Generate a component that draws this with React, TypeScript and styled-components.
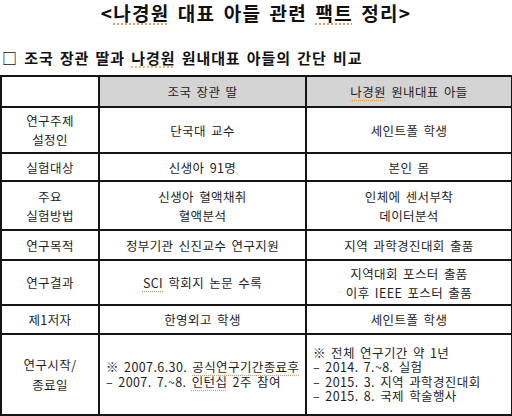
import React from "react";
import styled, { createGlobalStyle } from "styled-components";

const GlobalStyle = createGlobalStyle`
  body {
    margin: 0;
    background: #ffffff;
    font-family: "Noto Sans CJK KR", "Noto Sans", sans-serif;
    color: #1e1e1e;
  }
`;

const Page = styled.div`
  width: 512px;
  height: 416px;
  overflow: hidden;
  display: flex;
  flex-direction: column;
`;

const Title = styled.h1`
  margin: 2px 0 0;
  height: 22px;
  line-height: 22px;
  text-align: center;
  font-size: 19px;
  font-weight: 700;
  letter-spacing: 1.2px;
  word-spacing: 3px;
  color: #111;
`;

const Subtitle = styled.h2`
  margin: 22px 0 0 2px;
  height: 24px;
  line-height: 24px;
  font-size: 15px;
  font-weight: 700;
  letter-spacing: 0.9px;
  word-spacing: 2px;
  color: #111;
`;

// orange dotted line the word processor draws under flagged words
const Marked = styled.span`
  text-decoration-line: underline;
  text-decoration-style: dotted;
  text-decoration-color: #e3a04a;
  text-underline-offset: 3px;
`;

const Table = styled.table`
  margin-top: 5px;
  width: 511px;
  border-collapse: collapse;
  table-layout: fixed;
  font-size: 12.5px;
  letter-spacing: 0.4px;
  word-spacing: 2px;
`;

const Row = styled.tr<{ $h: number }>`
  height: ${(p) => p.$h}px;
`;

const Cell = styled.td<{ $head?: boolean; $list?: boolean }>`
  border: 2px solid #151515;
  padding: ${(p) => (p.$list ? "0 6px" : "0 4px")};
  text-align: ${(p) => (p.$list ? "left" : "center")};
  vertical-align: middle;
  line-height: ${(p) => (p.$list ? "14.5px" : "19px")};
  background: ${(p) => (p.$head ? "#d4d4d4" : "#ffffff")};
  white-space: nowrap;
`;

const Line = styled.div``;

const rows: { h: number; label: string[]; a: React.ReactNode[]; b: React.ReactNode[] }[] = [
  { h: 46, label: ["연구주제", "설정인"], a: ["단국대 교수"], b: ["세인트폴 학생"] },
  { h: 28, label: ["실험대상"], a: ["신생아 91명"], b: ["본인 몸"] },
  { h: 49, label: ["주요", "실험방법"], a: ["신생아 혈액채취", "혈액분석"], b: ["인체에 센서부착", "데이터분석"] },
  { h: 30, label: ["연구목적"], a: ["정부기관 신진교수 연구지원"], b: ["지역 과학경진대회 출품"] },
  {
    h: 45,
    label: ["연구결과"],
    a: [
      <>
        <Marked>SCI</Marked> 학회지 논문 수록
      </>,
    ],
    b: ["지역대회 포스터 출품", "이후 IEEE 포스터 출품"],
  },
  { h: 29, label: ["제1저자"], a: ["한영외고 학생"], b: ["세인트폴 학생"] },
];

const App = () => {
  return (
    <Page>
      <GlobalStyle />
      <Title>
        &lt;<Marked>나경원</Marked> 대표 아들 관련 <Marked>팩트</Marked> 정리&gt;
      </Title>
      <Subtitle>
        □ 조국 장관 딸과 <Marked>나경원</Marked> 원내대표 아들의 간단 비교
      </Subtitle>
      <Table>
        <colgroup>
          <col style={{ width: 98 }} />
          <col style={{ width: 207 }} />
          <col style={{ width: 206 }} />
        </colgroup>
        <tbody>
          <Row $h={31}>
            <Cell />
            <Cell $head>조국 장관 딸</Cell>
            <Cell $head>
              <Marked>나경원</Marked> 원내대표 아들
            </Cell>
          </Row>
          {rows.map((r, i) => (
            <Row $h={r.h} key={i}>
              <Cell>
                {r.label.map((t, j) => (
                  <Line key={j}>{t}</Line>
                ))}
              </Cell>
              <Cell>
                {r.a.map((t, j) => (
                  <Line key={j}>{t}</Line>
                ))}
              </Cell>
              <Cell>
                {r.b.map((t, j) => (
                  <Line key={j}>{t}</Line>
                ))}
              </Cell>
            </Row>
          ))}
          <Row $h={81}>
            <Cell style={{ lineHeight: "20px" }}>
              <Line>연구시작/</Line>
              <Line>종료일</Line>
            </Cell>
            <Cell $list>
              <Line>
                ※ 2007.6.30. <Marked>공식연구기간종료후</Marked>
              </Line>
              <Line>
                – 2007. 7.~8. <Marked>인턴십</Marked> 2주 참여
              </Line>
            </Cell>
            <Cell $list>
              <Line>※ 전체 연구기간 약 1년</Line>
              <Line>– 2014. 7.~8. 실험</Line>
              <Line>– 2015. 3. 지역 과학경진대회</Line>
              <Line>– 2015. 8. 국제 학술행사</Line>
            </Cell>
          </Row>
        </tbody>
      </Table>
    </Page>
  );
};

export default App;
